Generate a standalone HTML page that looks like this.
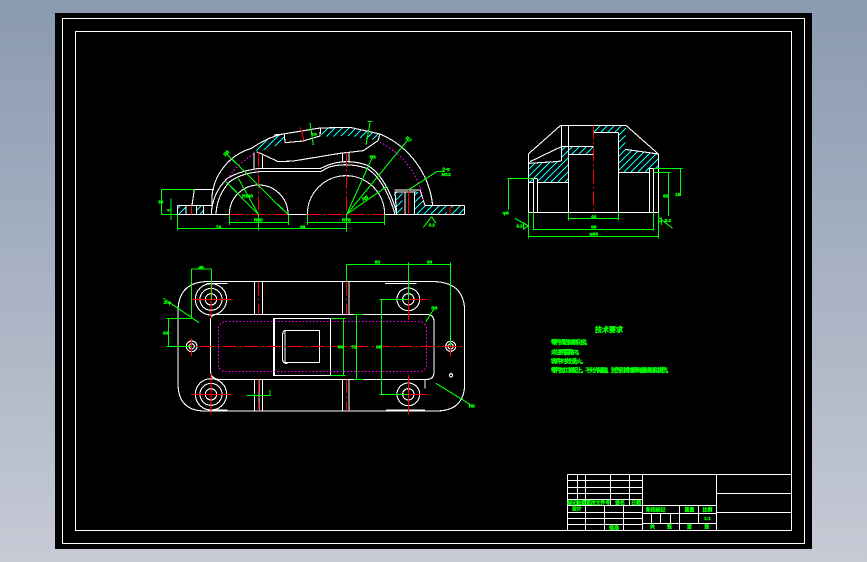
<!DOCTYPE html>
<html><head><meta charset="utf-8"><style>
html,body{margin:0;padding:0;width:867px;height:562px;overflow:hidden;background:linear-gradient(#8a9ab0,#c6cad5)}
svg{position:absolute;left:0;top:0}
path,rect,circle,line{fill:none;shape-rendering:crispEdges;vector-effect:non-scaling-stroke;stroke-width:1.1}
.w path,.w rect,.w circle{stroke:#fff}
.r path{stroke:#f00;stroke-dasharray:14 3 2 3}
.g path{stroke:#0f0}
.m path{stroke:#f0f;stroke-dasharray:1.5 2}
.t path{stroke:none;fill:url(#h)}
text{fill:#0f0;stroke:#0f0;stroke-width:1;font-family:"Liberation Sans","Noto Sans CJK SC",sans-serif;font-weight:bold;text-anchor:middle}
.l{font-size:15px;letter-spacing:-.5px}
.c text{text-anchor:start;font-size:6px;stroke-width:.3}
</style></head><body>
<svg width="867" height="562" viewBox="0 0 867 562" xmlns="http://www.w3.org/2000/svg">
<defs>
<pattern id="h" width="21" height="21" patternUnits="userSpaceOnUse"><path d="M-2 23L23 -2M-2 2L2 -2M19 23L23 19" style="stroke:#0ff;stroke-width:3.4;vector-effect:none;shape-rendering:crispEdges"/></pattern>
</defs>
<rect x="55" y="13" width="757" height="536" style="fill:#000;stroke:none"/>
<g class="w">
<rect x="62.5" y="18.5" width="742" height="525"/>
<rect x="75.5" y="31.5" width="716" height="499"/>
</g>

<!-- FRONT VIEW -->
<g transform="translate(150,110) scale(.33333)">
<g class="t"><path d="M82 287H108V313H82Z"/><path d="M140 287H160V313H140Z"/><path d="M735 246H757V313H742Z"/><path d="M795 246H810L825 287H890V313H795Z"/><path d="M905 287H944V313H905Z"/><path d="M305 122L372 75 403 72 405 98 335 122Z"/><path d="M512 52L600 52 692 72 685 92 640 85 600 78 515 80Z"/></g>
<g class="w">
<path d="M82 286H186M82 286V313M82 313H240M414 313H472M704 313H944M944 286V313M825 286H944"/>
<path d="M126 286L133 238H192"/>
<path d="M186 286A165 165 0 0 1 305 115Q350 82 400 72L510 54 600 52 690 72"/>
<path d="M690 72A262 262 0 0 1 848 286"/>
<path d="M184 313Q186 250 232 205 270 182 330 175H512L535 165Q590 145 650 165 700 190 735 290L740 313"/>
<path d="M198 313Q200 260 236 218 270 190 330 185H512L535 172Q590 155 650 175 695 200 728 290L735 313"/>
<path d="M238 313A88 88 0 0 1 414 313M472 313A116 116 0 0 1 704 313"/>
<path d="M372 75L403 72 405 98 460 93 510 78 512 52M690 72L684 92 640 122 570 130 430 153 385 155 320 125"/>
<path d="M312 127V175M338 137V175M577 127V155M597 127V155"/>
<path d="M733 240H808M733 246H800M735 246L740 313M765 246V313M793 246V313M810 240L825 286M108 286V313M140 286V313M160 286V313"/>
</g>
<g class="m"><path d="M233 207Q262 160 315 130M690 97A236 236 0 0 1 820 270"/></g>
<g class="r"><path d="M325 127V313M590 127V313M238 313H415M470 313H704"/><path d="M125 286V313M775 240V313M900 286V313M451 52L462 92" style="stroke-dasharray:none"/></g>
<g class="g">
<path d="M35 238H133M35 313H82M35 238V313M63 265V330M50 300H64"/>
<path d="M82 355H590M82 313V362M325 313V362M590 313V365M238 337H415M238 313V345M415 313V345M472 337H703M472 313V345M703 313V345"/>
<path d="M228 130L413 313M668 140L590 313M775 88L590 313M228 215L325 313M265 205L325 313M590 313L712 228M775 240L860 185H885"/>
<path d="M480 38L490 105M485 72H500M660 38L648 105M652 35H668M845 320L820 352M845 320L858 340"/>
</g>
<text class="l" x="32" y="281">36</text><text class="l" x="55" y="304" style="font-size:9px">5</text>
<text class="l" x="205" y="356">74</text><text class="l" x="458" y="355">88</text>
<text class="l" x="325" y="335">R60</text><text class="l" x="589" y="335">R78</text>
<text class="l" x="229" y="135" transform="rotate(-45 229 130)">R8</text>
<text class="l" x="668" y="146">R5</text><text class="l" x="775" y="93" transform="rotate(40 775 88)">R7</text>
<text class="l" x="292" y="262">R140</text><text class="l" x="645" y="270" transform="rotate(-30 645 265)">R8</text>
<text class="l" x="888" y="182">2-φ</text><text class="l" x="888" y="198">M12</text>
<text class="l" x="845" y="350" style="font-size:14px">3.2</text>
<text class="l" x="492" y="76" style="font-size:12px">1.6</text>
</g>

<!-- SIDE VIEW -->
<g transform="translate(490,110) scale(.33333)">
<g class="t"><path d="M115 160L215 153V110H310V133H235V217H143V205H130V217H115Z"/><path d="M310 46H408L405 118 505 132V175H478V187H385V68H310Z"/></g>
<g class="w">
<path d="M115 307H505M115 132V307M505 132V307M115 132L212 46H408L505 132"/>
<path d="M214 46V153M235 46V307M385 68V307M310 68H385M115 160L195 155 214 153M120 155L214 110H310M235 133H310"/>
<path d="M143 217H235M115 217H130M130 205H143M130 205V307M143 205V307M478 175V307M490 175V307M478 175H505M385 187H478M405 118L505 132"/>
</g>
<g class="r"><path d="M310 46V307"/></g>
<g class="g">
<path d="M52 205H130M55 205V300M115 307V385M505 307V385M115 380H505M130 358H490M130 307V362M490 307V362M235 325H385M235 307V332M385 307V332"/>
<path d="M490 175H578M572 175V258M490 187H542M535 187V318"/>
<path d="M75 325L115 348 100 338V358L115 348M505 322L548 355M505 335H515M515 322V345"/>
</g>
<text class="l" x="47" y="314">φ8</text><text class="l" x="311" y="376">φ96</text><text class="l" x="311" y="355">66</text><text class="l" x="311" y="324">44</text>
<text class="l" x="563" y="258">16</text><text class="l" x="527" y="263">65</text>
<text class="l" x="88" y="353">3.2</text><text class="l" x="533" y="336">3.2</text>
</g>

<!-- PLAN VIEW -->
<g transform="translate(150,255) scale(.33333)">
<g class="w">
<path d="M165 80H858Q944 85 944 170V385Q944 468 858 468H165Q84 468 84 385V170Q84 85 165 80Z"/>
<path d="M170 86H232M705 85H800M185 465H232M708 465H825"/>
<path d="M205 178H832Q852 180 852 200V350Q852 373 832 373H205Q182 370 182 350V190Q185 178 205 178Z"/>
<path d="M313 80V178M338 80V178M577 80V178M597 80V178M313 373V468M327 373V468M338 373V468M577 373V468M597 373V468M825 373V400"/>
<circle cx="183" cy="133" r="47"/><circle cx="183" cy="133" r="33"/><circle cx="183" cy="133" r="17"/>
<circle cx="183" cy="418" r="47"/><circle cx="183" cy="418" r="33"/><circle cx="183" cy="418" r="17"/>
<circle cx="775" cy="133" r="34"/><circle cx="775" cy="133" r="17"/>
<circle cx="775" cy="418" r="34"/><circle cx="775" cy="418" r="17"/>
<circle cx="125" cy="274" r="16"/><circle cx="125" cy="274" r="8"/><circle cx="902" cy="274" r="15"/><circle cx="902" cy="274" r="8"/><circle cx="903" cy="361" r="5"/>
<rect x="370" y="190" width="172" height="171"/><rect x="373" y="190" width="169" height="171"/>
<rect x="405" y="226" width="104" height="97"/>
<path d="M405 226Q398 228 398 238V315Q398 325 412 326"/>
</g>
<g class="m"><rect x="205" y="200" width="625" height="150" rx="22" style="stroke:#f0f;stroke-dasharray:1.5 2"/></g>
<g class="r">
<path d="M85 274H942"/>
<path d="M325 80V178M590 80V178M325 373V468M590 373V468"/>
<path d="M125 133H243M183 90V190M690 133H833M775 85V195M123 418H243M183 355V478M690 418H833M775 360V478M125 250V303M902 250V303" style="stroke-dasharray:none"/>
</g>
<g class="g">
<path d="M124 42H184M124 42V190M184 42V133M50 190H125M50 274H125M55 190V274M40 130L147 203"/>
<path d="M590 28H902M590 28V80M775 22V133M902 22V274M688 133H775M688 418H775M694 133V418M542 190H587M542 361H587M580 190V361M612 178H640M612 373H640M619 178V373"/>
<path d="M828 200L853 160M858 385L960 448M290 421H362M313 415V425M360 405V421"/>
</g>
<text class="l" x="153" y="42">45</text><text class="l" x="46" y="239">34</text><text class="l" x="52" y="147">2-φ</text>
<text class="l" x="682" y="26">80</text><text class="l" x="838" y="26">34</text><text class="l" x="686" y="281">68</text>
<text class="l" x="571" y="281">66</text><text class="l" x="611" y="281">72</text>
<text class="l" x="853" y="164">R8</text><text class="l" x="965" y="457">R8</text>
</g>

<!-- TECH NOTES -->
<g class="c">
<text x="595" y="332" style="font-size:7px;stroke-width:.4">技术要求</text>
<text x="551" y="344.5" textLength="40">零件须去除氧化皮。</text>
<text x="551" y="354.5" textLength="32">未注明圆角R5。</text>
<text x="551" y="363.5" textLength="36">铸件时效 退火。</text>
<text x="551" y="372.5" textLength="121">零件加工装配上，不允许磕碰、划伤和锈蚀等有害缺陷和损伤。</text>
</g>

<!-- TITLE BLOCK -->
<g transform="translate(560,465) scale(.33333)">
<g class="w">
<path d="M22 28H696M22 28V196M248 28V196M469 28V196"/>
<path d="M22 46H248M22 67H248M22 85H248M22 103H248M22 121H469M22 143H248M22 160H248M22 178H248"/>
<path d="M52 28V121M76 28V196M152 28V121M209 28V121M133 121V196M190 121V196"/>
<path d="M248 145H469M248 175H469M358 121V196M415 121V175M274 145V175M301 145V175M331 145V175"/>
<path d="M469 85H696M469 142H696"/>
</g>
<g>
<text class="l" x="36" y="119">标记</text><text class="l" x="64" y="119">处数</text>
<text class="l" x="114" y="119">更改文件号</text><text class="l" x="180" y="119">签名</text><text class="l" x="228" y="119">日期</text>
<text class="l" x="50" y="137">设计</text><text class="l" x="162" y="193">批准</text>
<text class="l" x="287" y="139">阶段标记</text><text class="l" x="388" y="139">重量</text><text class="l" x="442" y="139">比例</text>
<text class="l" x="442" y="165">1:1</text>
<text class="l" x="277" y="191">共</text><text class="l" x="328" y="191">张</text><text class="l" x="388" y="191">第</text><text class="l" x="440" y="191">张</text>
</g>
</g>
</svg>
</body></html>
